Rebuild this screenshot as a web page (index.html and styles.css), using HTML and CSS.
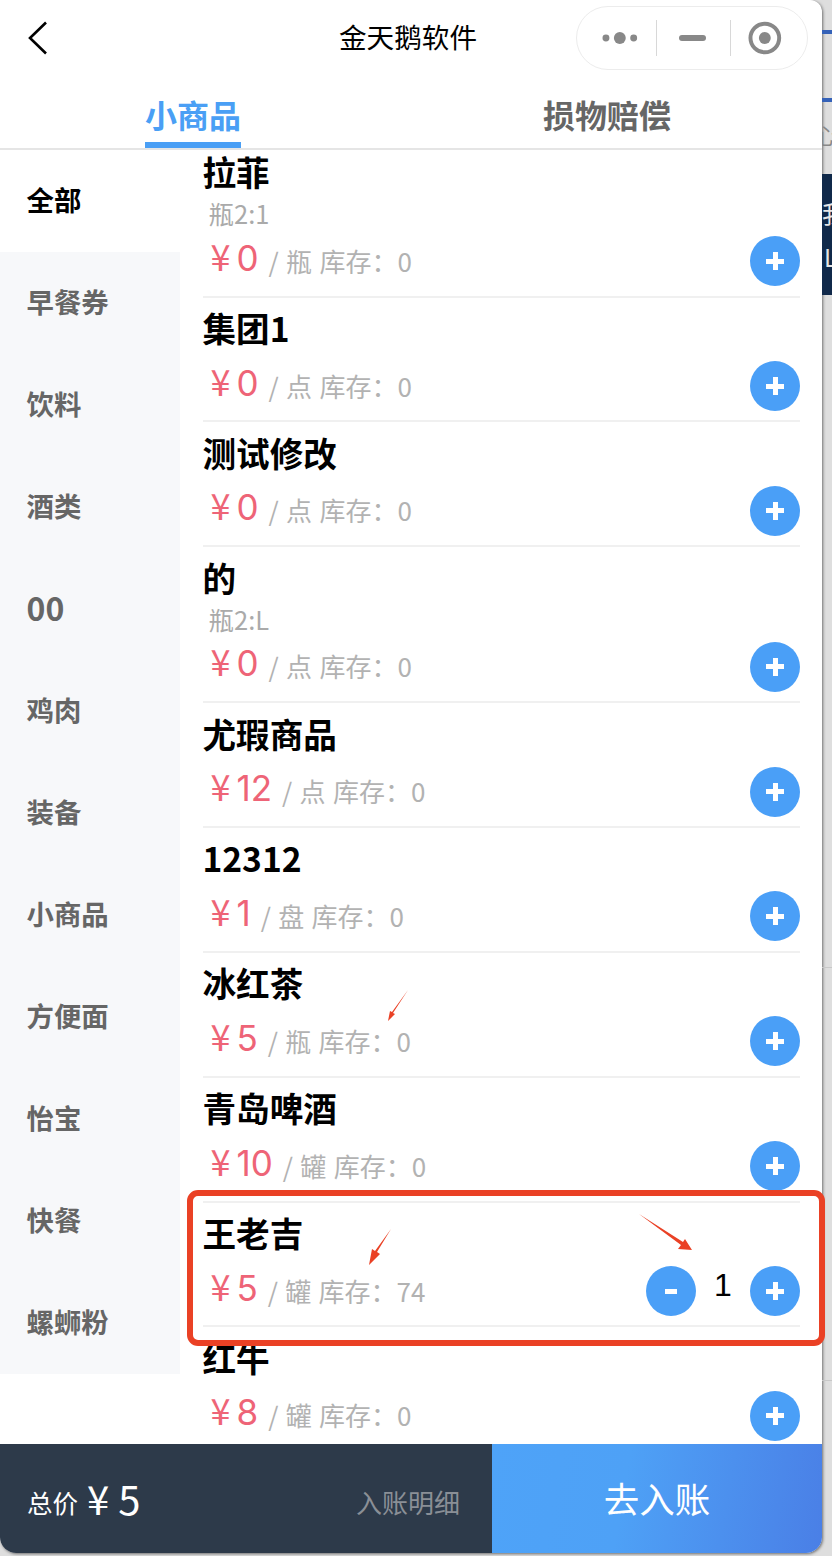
FILE: index.html
```html
<!DOCTYPE html>
<html lang="zh-CN">
<head>
  <meta charset="UTF-8" />
  <title>金天鹅软件</title>
  <meta name="viewport" content="width=device-width, initial-scale=1" />
  <link rel="stylesheet" href="styles.css">
</head>
<body>
  <div class="window">
    <div class="topbar">
      <svg class="back" width="20" height="34" viewBox="0 0 20 34"><path d="M18 1.5 2 17l16 15.500" fill="none" stroke="#000" stroke-width="2.600"/></svg>
      <div class="title">金天鹅软件</div>
      <div class="capsule">
        <svg width="36" height="14" viewBox="0 0 36 14"><circle cx="4" cy="7" r="3.500" fill="#888"/><circle cx="18" cy="7" r="6" fill="#888"/><circle cx="32" cy="7" r="3.500" fill="#888"/></svg>
        <span class="capsule-line"></span>
        <span class="capsule-min"></span>
        <span class="capsule-line"></span>
        <svg width="34" height="34" viewBox="0 0 34 34"><circle cx="17" cy="17" r="14.500" fill="none" stroke="#888" stroke-width="4"/><circle cx="17" cy="17" r="6" fill="#888"/></svg>
      </div>
    </div>
    <div class="tabs">
      <div class="tab active"><span>小商品</span></div>
      <div class="tab"><span>损物赔偿</span></div>
    </div>
    <div class="main">
      <div class="sidebar">
        <a class="current">全部</a>
        <a>早餐券</a>
        <a>饮料</a>
        <a>酒类</a>
        <a class="num">00</a>
        <a>鸡肉</a>
        <a>装备</a>
        <a>小商品</a>
        <a>方便面</a>
        <a>怡宝</a>
        <a>快餐</a>
        <a>螺蛳粉</a>
      </div>
      <div class="list">
        <div class="goods tall">
          <div class="name">拉菲</div>
          <div class="spec">瓶2:1</div>
          <div class="row"><span class="price">¥<b>0</b></span><span class="unit">/ 瓶 库存：0</span><i class="btn plus"></i></div>
        </div>
        <div class="goods">
          <div class="name">集团1</div>
          <div class="row"><span class="price">¥<b>0</b></span><span class="unit">/ 点 库存：0</span><i class="btn plus"></i></div>
        </div>
        <div class="goods">
          <div class="name">测试修改</div>
          <div class="row"><span class="price">¥<b>0</b></span><span class="unit">/ 点 库存：0</span><i class="btn plus"></i></div>
        </div>
        <div class="goods tall">
          <div class="name">的</div>
          <div class="spec">瓶2:L</div>
          <div class="row"><span class="price">¥<b>0</b></span><span class="unit">/ 点 库存：0</span><i class="btn plus"></i></div>
        </div>
        <div class="goods">
          <div class="name">尤瑕商品</div>
          <div class="row"><span class="price">¥<b>12</b></span><span class="unit">/ 点 库存：0</span><i class="btn plus"></i></div>
        </div>
        <div class="goods">
          <div class="name">12312</div>
          <div class="row"><span class="price">¥<b>1</b></span><span class="unit">/ 盘 库存：0</span><i class="btn plus"></i></div>
        </div>
        <div class="goods">
          <div class="name">冰红茶</div>
          <div class="row"><span class="price">¥<b>5</b></span><span class="unit">/ 瓶 库存：0</span><i class="btn plus"></i></div>
        </div>
        <div class="goods">
          <div class="name">青岛啤酒</div>
          <div class="row"><span class="price">¥<b>10</b></span><span class="unit">/ 罐 库存：0</span><i class="btn plus"></i></div>
        </div>
        <div class="goods">
          <div class="name">王老吉</div>
          <div class="row"><span class="price">¥<b>5</b></span><span class="unit">/ 罐 库存：74</span><i class="btn minus"></i><span class="qty">1</span><i class="btn plus"></i></div>
        </div>
        <div class="goods">
          <div class="name">红牛</div>
          <div class="row"><span class="price">¥<b>8</b></span><span class="unit">/ 罐 库存：0</span><i class="btn plus"></i></div>
        </div>
      </div>
    </div>
    <div class="footer">
      <div class="total">
        <span class="total-label">总价</span>
        <span class="total-num">¥ 5</span>
        <span class="detail">入账明细</span>
      </div>
      <div class="submit">去入账</div>
    </div>
  </div>

  <div class="behind">
    <span class="behind-rule one"></span>
    <span class="behind-rule two"></span>
    <span class="behind-text">心</span>
    <span class="behind-dark"><span class="dark-text">我</span><span class="dark-text">L</span></span>
    <span class="behind-faint a"></span>
    <span class="behind-faint b"></span>
  </div>

  <!-- annotations drawn on top of the screenshot -->
  <div class="mark-box"></div>
  <svg class="marks" width="832" height="1556" viewBox="0 0 832 1556">
    <path d="M408 990 393 1013 395 1014 388 1021 390 1011 392 1012z" fill="#ea4125"/>
    <path d="M391 1229 377 1252 380 1254 369 1265 372 1249 375 1251z" fill="#ea4125"/>
    <path d="M639 1214 683 1242 685 1239 692 1250 678 1249 681 1245z" fill="#ea4125"/>
  </svg>
</body>
</html>
```

FILE: styles.css
```css
* {
  box-sizing: border-box;
}
html, body {
  margin: 0;
  height: 1556px;
  overflow: hidden;
}
body {
  position: relative;
  display: flex;
  background-color: #dedede;
  font-family: "Noto Sans CJK SC", "Liberation Sans", sans-serif;
}
.window {
  position: relative;
  width: 822px;
  height: 1553px;
  flex: none;
  display: flex;
  flex-direction: column;
  background-color: #fff;
  border-radius: 0 12px 16px 16px;
  overflow: hidden;
  box-shadow: 1px 1px 3px rgba(0, 0, 0, 0.5);
}
.topbar {
  height: 75px;
  flex: none;
  display: flex;
  align-items: center;
  padding: 0 14px 0 28px;
}
.back {
  flex: none;
  margin-top: 1px;
}
.title {
  flex: none;
  width: 138px;
  margin-left: 291px;
  margin-top: -3px;
  font-size: 27.600px;
  color: #000;
  white-space: nowrap;
}
.capsule {
  width: 232px;
  height: 64px;
  margin-left: auto;
  margin-top: 1px;
  display: flex;
  align-items: center;
  padding: 0 25px 0 25px;
  border: 1px solid #ececec;
  border-radius: 32px;
}
.capsule-line {
  width: 1px;
  height: 36px;
  margin: 0 0 0 18px;
  background-color: #d8d8d8;
}
.capsule-min {
  width: 28px;
  height: 6px;
  margin: 0 24px 0 22px;
  border-radius: 3px;
  background-color: #888;
}
.capsule-min + .capsule-line {
  margin: 0 17px 0 0;
}
.tabs {
  height: 75px;
  flex: none;
  display: flex;
  border-bottom: 2px solid #e5e5e5;
}
.tab {
  flex: 1;
  display: flex;
  justify-content: center;
  font-size: 32px;
  font-weight: 700;
  color: #666;
}
.tab span {
  height: 73px;
  padding-top: 16px;
  line-height: 46px;
}
.tab:first-child {
  padding-right: 52px;
  flex: none;
  width: 438px;
}
.tab:last-child {
  padding-right: 46px;
}
.tab.active {
  color: #4a9ff5;
}
.tab.active span {
  border-bottom: 6px solid #4a9ff5;
}
.main {
  flex: 1;
  min-height: 0;
  display: flex;
  overflow: hidden;
}
.sidebar {
  width: 180px;
  flex: none;
}
.sidebar a {
  display: flex;
  align-items: center;
  height: 102px;
  padding: 0 0 4px 26.500px;
  font-size: 27.400px;
  font-weight: 700;
  color: #666;
  background-color: #f7f8fa;
}
.sidebar a.num {
  font-size: 32px;
}
.sidebar a.current {
  color: #000;
  background-color: #fff;
}
.list {
  flex: 1;
  min-width: 0;
  margin: -8.300px 22px 0 22.500px;
}
.goods {
  height: 124.890px;
  padding-top: 7.500px;
  border-bottom: 2px solid #f0f0f0;
}
.goods.tall {
  height: 155.800px;
}
.name {
  height: 46px;
  line-height: 46px;
  font-size: 33.600px;
  font-weight: 700;
  color: #000;
  white-space: nowrap;
}
.spec {
  height: 31px;
  padding-left: 6px;
  line-height: 36px;
  font-size: 25.500px;
  color: #aaa;
}
.row {
  display: flex;
  align-items: center;
  height: 50px;
  margin-top: 9px;
  padding-left: 8px;
}
.price {
  font-size: 36px;
  line-height: 50px;
  color: #ee6477;
  margin-top: -8px;
  white-space: nowrap;
}
.price b {
  font-family: Inter, sans-serif;
  font-size: 35px;
  font-weight: 400;
  margin-left: 6px;
}
.unit {
  margin-left: 10px;
  font-size: 26px;
  word-spacing: 1.500px;
  color: #b2b2b2;
  white-space: nowrap;
}
.btn {
  width: 50px;
  height: 50px;
  flex: none;
  margin-top: 2px;
  margin-left: auto;
  border-radius: 50%;
  background-color: #4a9ff7;
  background-repeat: no-repeat;
  background-position: center;
}
.btn.plus {
  background-image: linear-gradient(#fff, #fff), linear-gradient(#fff, #fff);
  background-size: 18px 5px, 5px 18px;
}
.btn.minus {
  background-image: linear-gradient(#fff, #fff);
  background-size: 12px 5px;
}
.btn.minus + .qty + .btn {
  margin-left: 0;
}
.qty {
  width: 54px;
  margin-top: -10px;
  font-family: "Liberation Sans", sans-serif;
  font-size: 32px;
  color: #000;
  text-align: center;
}
.footer {
  height: 109px;
  flex: none;
  display: flex;
}
.total {
  width: 492px;
  flex: none;
  display: flex;
  align-items: center;
  padding: 0 32px 0 27px;
  background-color: #2d3a4a;
  color: #fff;
}
.total-label {
  font-size: 25.500px;
  margin-top: 6px;
}
.total-num {
  margin-left: 9px;
  font-size: 40px;
  margin-top: -2px;
}
.detail {
  margin-left: auto;
  margin-top: 5px;
  font-size: 26px;
  color: #8a8f96;
}
.submit {
  flex: 1;
  display: flex;
  align-items: center;
  justify-content: center;
  padding-bottom: 2px;
  font-size: 35.500px;
  color: #fff;
  background: linear-gradient(100deg, #4ea3f8 0%, #4ea1f6 40%, #4a7fe6 100%);
}
.behind {
  position: relative;
  flex: 1;
  overflow: hidden;
}
.behind-rule {
  display: block;
  position: absolute;
  left: 0;
  width: 100%;
  height: 4px;
  background-color: #3562b8;
}
.behind-rule.one {
  top: 30px;
}
.behind-rule.two {
  top: 98px;
}
.behind-text {
  position: absolute;
  top: 118px;
  left: -7px;
  font-size: 22px;
  color: #888;
}
.behind-dark {
  position: absolute;
  top: 174px;
  left: 0;
  width: 100%;
  height: 121px;
  overflow: hidden;
  background-color: #10294a;
}
.dark-text {
  position: absolute;
  left: 0;
  top: 22px;
  font-size: 24px;
  line-height: 34px;
  color: #e6e6e6;
}
.dark-text + .dark-text {
  left: 2px;
  top: 66px;
}
.behind-faint {
  position: absolute;
  left: 0;
  width: 100%;
  height: 1px;
  background-color: #c8c8c8;
}
.behind-faint.a {
  top: 967px;
}
.behind-faint.b {
  top: 1380px;
}
.mark-box {
  position: absolute;
  left: 187px;
  top: 1190px;
  width: 638px;
  height: 156px;
  border: 6px solid #ea4125;
  border-radius: 11px;
}
.marks {
  position: absolute;
  left: 0;
  top: 0;
}
```
